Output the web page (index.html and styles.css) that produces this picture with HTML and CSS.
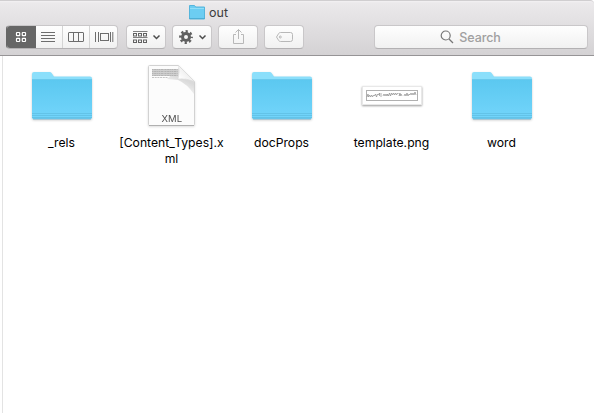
FILE: index.html
```html
<!DOCTYPE html>
<html lang="en">
<head>
<meta charset="utf-8">
<title>out</title>
<link rel="stylesheet" href="styles.css">
</head>
<body>
<svg class="defs" width="0" height="0">
  <defs>
    <linearGradient id="face" x1="0" y1="0" x2="0" y2="1">
      <stop offset="0" stop-color="#5bc8f0"/><stop offset="1" stop-color="#73d5fb"/>
    </linearGradient>
    <linearGradient id="fold" gradientUnits="userSpaceOnUse" x1="32" y1="15" x2="40" y2="8">
      <stop offset="0" stop-color="#fff"/><stop offset="1" stop-color="#eee"/>
    </linearGradient>
    <linearGradient id="shade" gradientUnits="userSpaceOnUse" x1="34" y1="14" x2="27" y2="28">
      <stop offset="0" stop-color="#dadada"/><stop offset="1" stop-color="#fcfcfc"/>
    </linearGradient>
    <symbol id="folder" viewBox="0 0 62 50">
      <path d="M1 46V3q0-2 2-2h15.500q1.500 0 2.300 1.200L23 5.500h36q2 0 2 2V46q0 2-2 2H3q-2 0-2-2z" fill="#8bdffb"/>
      <path d="M1 8.500h60V46q0 2-2 2H3q-2 0-2-2z" fill="url(#face)"/>
      <path d="M1 8.500h60" stroke="#65c4e8" stroke-width=".7"/>
      <path d="M1 42.500h60M1 44.500h60M1 46.500h60" stroke="#60bfe3" stroke-width=".8"/>
      <path d="M2 48h58" stroke="#55a8ca" stroke-width=".7"/>
    </symbol>
  </defs>
</svg>
<header class="chrome">
  <div class="title">
    <svg width="16" height="15" viewBox="0 0 16 15"><path d="M.5 14V.5h5l1.200 1.500H15.500v12z" fill="#6ccdf2" stroke="#55b5dc"/><path d="M1 3.500h14" stroke="#91def8"/><path d="M0 13.500h16" stroke="#4daed5"/></svg>
    <span>out</span>
  </div>
  <div class="toolbar">
    <div class="segments">
      <div class="segment active"><svg width="30" height="23" viewBox="0 0 30 23" fill="none" stroke="#fff" stroke-width="1.200"><rect x="10.500" y="7.500" width="3.200" height="3.200" rx=".5"/><rect x="16.300" y="7.500" width="3.200" height="3.200" rx=".5"/><rect x="10.500" y="13.300" width="3.200" height="3.200" rx=".5"/><rect x="16.300" y="13.300" width="3.200" height="3.200" rx=".5"/></svg></div>
      <div class="segment"><svg width="26" height="23" stroke="#6d6d6d"><path d="M5 6.500h14M5 9.500h14M5 12.500h14M5 15.500h14"/></svg></div>
      <div class="segment"><svg width="26" height="23" fill="none" stroke="#6d6d6d"><rect x="5.500" y="6.500" width="15" height="9" rx=".5"/><path d="M10.500 6.500v9M15.500 6.500v9"/></svg></div>
      <div class="segment"><svg width="27" height="23" fill="none" stroke="#6d6d6d"><rect x="10.500" y="7.500" width="8" height="7"/><path d="M5.500 6v10M8.500 6v10M20.500 6v10M22.800 6v10"/></svg></div>
    </div>
    <div class="button group"><svg width="38" height="22" fill="none" stroke="#626262"><path d="M6 5.500h14.500M6 11.500h14.500" stroke-width=".8"/><rect x="6.500" y="7.500" width="3" height="2.500"/><rect x="11.500" y="7.500" width="3" height="2.500"/><rect x="16.500" y="7.500" width="3" height="2.500"/><rect x="6.500" y="14" width="3" height="2.500"/><rect x="11.500" y="14" width="3" height="2.500"/><rect x="16.500" y="14" width="3" height="2.500"/><path d="M26.500 9.500l3 3 3-3" stroke="#4c4c4c" stroke-width="1.500"/></svg></div>
    <div class="button gear"><svg width="38" height="22" fill="none" stroke="#606060"><circle cx="13" cy="11" r="3.500" stroke-width="3"/><circle cx="13" cy="11" r="5.700" stroke-width="2.400" stroke-dasharray="2.240 2.240" stroke-dashoffset="1.120"/><path d="M26.500 9.500l3 3 3-3" stroke="#4c4c4c" stroke-width="1.500"/></svg></div>
    <div class="button share"><svg width="38" height="22" fill="none" stroke="#b8b8b8"><path d="M17 8.500h-2.500v9h10v-9H22M19.500 13V3.500M16.500 6.500l3-3 3 3"/></svg></div>
    <div class="button tag"><svg width="38" height="22" fill="none" stroke="#b8b8b8"><path d="M15.500 6.500h10q2 0 2 2v5q0 2-2 2h-10q-1 0-1.700-.8L11.500 11l2.300-3.700q.7-.8 1.700-.8z"/><circle cx="15.300" cy="11" r="1"/></svg></div>
    <div class="search"><svg width="14" height="14" fill="none" stroke="#777" stroke-width="1.200"><circle cx="5.700" cy="5.500" r="4.500"/><path d="M9 9l4 4"/></svg><span>Search</span></div>
  </div>
</header>
<main class="files">
  <figure class="file"><svg class="folder" width="62" height="50"><use href="#folder"/></svg><figcaption>_rels</figcaption></figure>
  <figure class="file"><svg class="document" width="50" height="64" viewBox="0 0 50 64">
    <path d="M1.500 2.500q0-1 1-1H31.500L47.500 17.500V60.500q0 1-1 1h-44q-1 0-1-1z" fill="#fcfcfc" stroke="#d2d2d2"/>
    <path d="M20 15L32 4l15 13v13Q40 20 31 16z" fill="url(#shade)"/>
    <path d="M5 5h26v7H5z" fill="#d0d0d0"/>
    <path d="M5 5.500h26M5 7.500h26M5 9.500h26M5 11.500h26" stroke="#b4b4b4" stroke-dasharray="1.500 .6 2.500 .5 1 .4"/>
    <path d="M5 13.500h16" stroke="#c4c4c4" stroke-dasharray="2 .7"/>
    <path d="M31.500 1.500q1.500 6-.5 13.500 8-1 16.500 2.500z" fill="url(#fold)" stroke="#dadada" stroke-width=".6"/>
    <path d="M2 61.500h45" stroke="#b0b0b0"/>
    <text x="24.800" y="58" text-anchor="middle">XML</text>
  </svg><figcaption>[Content_Types].x<br>ml</figcaption></figure>
  <figure class="file"><svg class="folder" width="62" height="50"><use href="#folder"/></svg><figcaption>docProps</figcaption></figure>
  <figure class="file"><div class="preview"><svg width="58" height="17" fill="none"><rect x="3.500" y="3.500" width="51" height="10" stroke="#b0b0b0"/><path d="M4 10l1-3 .5 3 1-2 1 2 1-2 1 2 1-2 1 1 1-2 1 3 1-3 1 1 1-2v3M18 6v4M20 9l1-2 1 2 1-2 1 2 .5-2 1 2 1-3 1 3 1-3 1 2 1-2 1 2 1-2 1 2 1-2 1 1M36 9l1-3v3l1-2 1 2M41 9l1-2 1 2 1-3 1 3 1-2 1 1 1-2 1 2 1-2 1 2 1-3 1 3" stroke="#8d8d8d" stroke-width=".7"/></svg></div><figcaption>template.png</figcaption></figure>
  <figure class="file"><svg class="folder" width="62" height="50"><use href="#folder"/></svg><figcaption>word</figcaption></figure>
</main>
</body>
</html>
```
FILE: styles.css
```css
* { box-sizing: border-box; }
body {
  margin: 0;
  height: 413px;
  overflow: hidden;
  background: #fff;
  font-family: Inter, "Liberation Sans", sans-serif;
  color: #000;
}
svg { display: block; flex: none; }
.defs { position: absolute; }
.chrome {
  height: 56px;
  border-top: 1px solid #d0ced0;
  border-bottom: 1px solid #969496;
  border-top-right-radius: 4px;
  background: linear-gradient(#f3f1f3 0, #ebe9eb 2px, #d4d2d4 100%);
}
.title {
  height: 24px;
  padding: 4px 0 0 189px;
  display: flex;
  align-items: flex-start;
  gap: 4px;
  font-size: 12.5px;
  line-height: 16px;
  color: #3c3c3c;
}
.toolbar { display: flex; padding: 0 6px; }
.segments, .button, .search {
  height: 24px;
  border: 1px solid #c9c7c9;
  border-bottom-color: #b3b1b3;
  border-radius: 4px;
  background: linear-gradient(#fefefe, #f1f1f1);
}
.segments { display: flex; width: 112px; overflow: hidden; margin-right: 8px; }
.segment { width: 27px; flex: none; border-left: 1px solid #d4d4d4; }
.segment:last-child { width: 28px; }
.segment.active { width: 30px; margin-left: -1px; margin-top: -1px; height: 24px; background: #666; border: 0; }
.segment.active + .segment { border-left: 0; width: 26px; }
.segments { border-left-color: #666; }
.button { width: 40px; margin-right: 6px; }
.tag { margin-right: 70px; }
.search {
  width: 214px;
  display: flex;
  justify-content: center;
  align-items: center;
  gap: 5px;
  padding-right: 21px;
  font-size: 12.5px;
  font-weight: 500;
  letter-spacing: -.1px;
  color: #a0a0a0;
}
.files {
  height: 357px;
  margin-left: 2px;
  border-left: 1px solid #e3e3e3;
  padding: 8px 0 0 4px;
  display: flex;
  align-items: flex-start;
}
.file {
  width: 110px;
  margin: 0;
  flex: none;
  display: grid;
  grid-template-rows: 71px auto;
  justify-items: center;
}
.folder { margin-top: 7px; filter: drop-shadow(0 1px 1px #0003); }
.document { filter: drop-shadow(0 1px 1px #0002); }
.document text { font-size: 9.500px; fill: #505050; }
.preview {
  width: 60px;
  height: 19px;
  margin-top: 22px;
  border: 1px solid #e8e8e8;
  box-shadow: 0 1px 2px #0006;
  background: #fff;
}
figcaption { font-size: 12.2px; line-height: 16px; text-align: center; white-space: nowrap; margin-left: -1px; }
```
